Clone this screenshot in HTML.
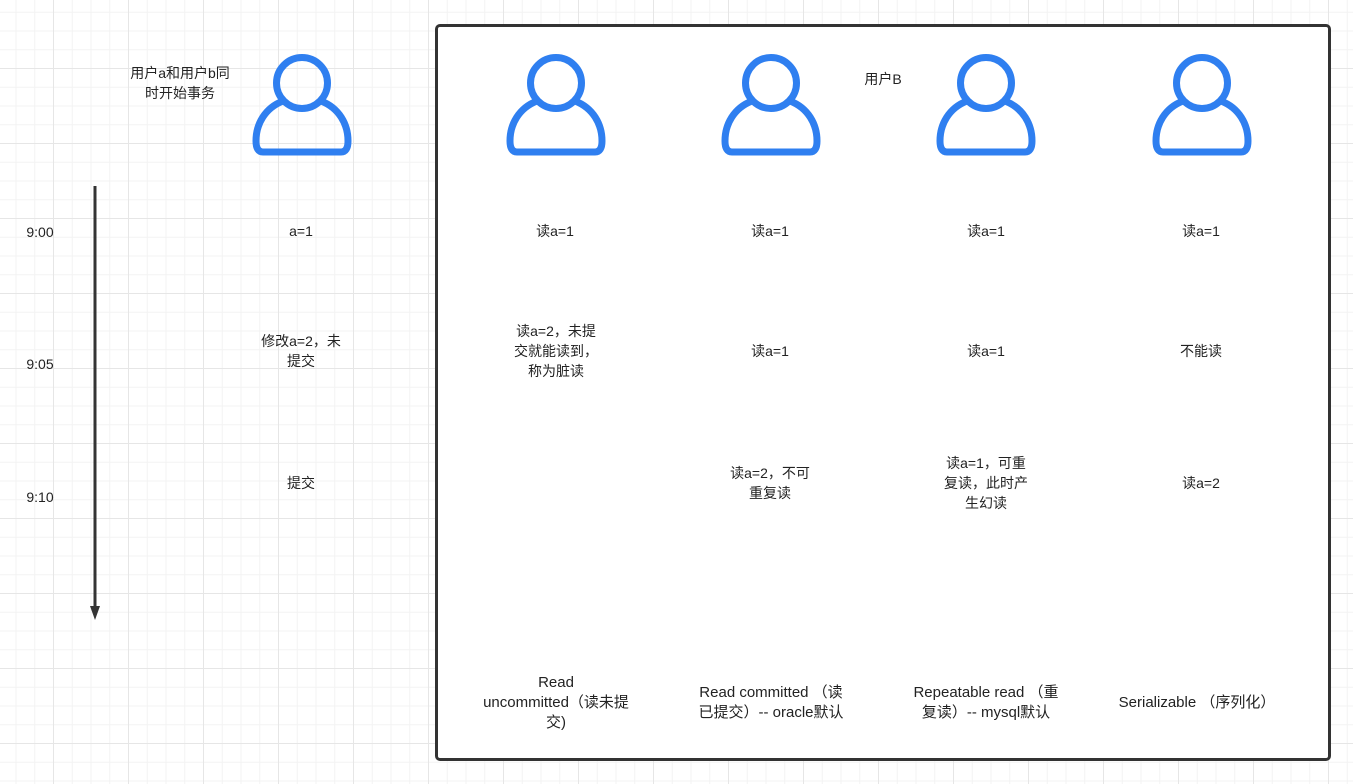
<!DOCTYPE html>
<html><head><meta charset="utf-8"><style>
html,body{margin:0;padding:0}
body{width:1353px;height:784px;position:relative;overflow:hidden;background-color:#fff;
background-image:
linear-gradient(to right,#e6e6e6 1px,transparent 1px),
linear-gradient(to bottom,#e6e6e6 1px,transparent 1px),
linear-gradient(to right,#f3f3f3 1px,transparent 1px),
linear-gradient(to bottom,#f3f3f3 1px,transparent 1px);
background-size:75px 75px,75px 75px,18.75px 18.75px,18.75px 18.75px;
background-position:53px 0,0 68px,15.5px 0,0 11.75px;
font-family:"Liberation Sans","Noto Sans CJK SC",sans-serif;font-size:14px;color:#222}
.t{position:absolute;text-align:center;line-height:20px;transform:translateX(-50%);white-space:nowrap}
.box{position:absolute;left:435px;top:24px;width:890px;height:731px;border:3px solid #333;border-radius:5px;background:#fff}
</style></head><body>
<div class="box"></div>
<svg width="1353" height="784" style="position:absolute;left:0;top:0">
<defs><g id="p" fill="none" stroke="#2f7ff0" stroke-width="7" stroke-linejoin="round">
<circle cx="0" cy="-27" r="25.5"/>
<path d="M-19,-9 C-37,-2 -46,14 -46,31 Q-46,42 -39,42 L39,42 Q46,42 46,31 C46,14 37,-2 19,-9"/>
</g></defs>
<use href="#p" x="302" y="110"/>
<use href="#p" x="556" y="110"/>
<use href="#p" x="771" y="110"/>
<use href="#p" x="986" y="110"/>
<use href="#p" x="1202" y="110"/>
<line x1="95" y1="186" x2="95" y2="608" stroke="#333" stroke-width="3"/>
<path d="M90,606 L100,606 L95,620 Z" fill="#333"/>
</svg>
<div class="t" style="left:180px;top:63px">用户a和用户b同<br>时开始事务</div>
<div class="t" style="left:883px;top:69px">用户B</div>
<div class="t" style="left:40px;top:222px">9:00</div>
<div class="t" style="left:40px;top:354px">9:05</div>
<div class="t" style="left:40px;top:487px">9:10</div>
<div class="t" style="left:301px;top:221px">a=1</div>
<div class="t" style="left:301px;top:331px">修改a=2，未<br>提交</div>
<div class="t" style="left:301px;top:473px">提交</div>
<div class="t" style="left:555px;top:221px">读a=1</div>
<div class="t" style="left:770px;top:221px">读a=1</div>
<div class="t" style="left:986px;top:221px">读a=1</div>
<div class="t" style="left:1201px;top:221px">读a=1</div>
<div class="t" style="left:556px;top:321px">读a=2，未提<br>交就能读到，<br>称为脏读</div>
<div class="t" style="left:770px;top:341px">读a=1</div>
<div class="t" style="left:986px;top:341px">读a=1</div>
<div class="t" style="left:1201px;top:341px">不能读</div>
<div class="t" style="left:770px;top:463px">读a=2，不可<br>重复读</div>
<div class="t" style="left:986px;top:453px">读a=1，可重<br>复读，此时产<br>生幻读</div>
<div class="t" style="left:1201px;top:473px">读a=2</div>
<div class="t" style="left:556px;top:673px;font-size:15px">Read<br>uncommitted（读未提<br>交)</div>
<div class="t" style="left:771px;top:683px;font-size:15px">Read committed （读<br>已提交）-- oracle默认</div>
<div class="t" style="left:986px;top:683px;font-size:15px">Repeatable read （重<br>复读）-- mysql默认</div>
<div class="t" style="left:1197px;top:693px;font-size:15px">Serializable （序列化）</div>
</body></html>
